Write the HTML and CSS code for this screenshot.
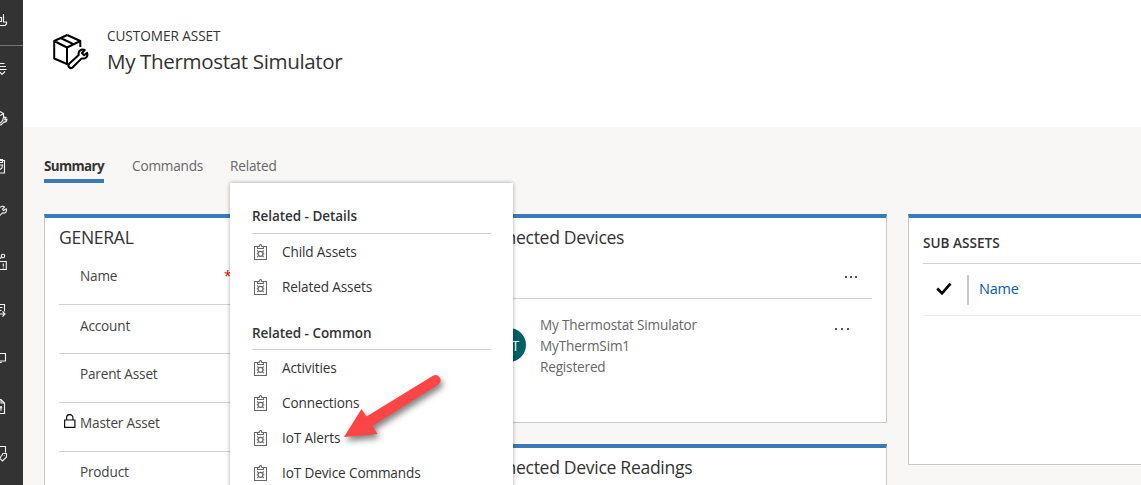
FILE: index.html
```html
<!DOCTYPE html>
<html lang="en">
<head>
<meta charset="utf-8">
<title>My Thermostat Simulator</title>
<link rel="stylesheet" href="styles.css">
</head>
<body>
<svg class="defs" width="0" height="0" aria-hidden="true">
  <symbol id="clip" viewBox="0 0 13 16">
    <path d="M3.500 2.500H.500v13h12v-13H9.500M3 4.500h7M3.500 4.500v-2h1.700C5.200 0 7.800 0 7.800 2.500h1.700v2" fill="none" stroke="#666" stroke-width="1.100"/>
    <circle cx="6.500" cy="9.800" r="2.500" fill="none" stroke="#666" stroke-width="1.200"/>
    <path d="M3.200 6.500l1.400 1.400M9.800 6.500L8.400 7.900M3.200 13.100l1.400-1.400M9.800 13.100l-1.400-1.400M2.700 9.800h1.200M9.100 9.800h1.200" stroke="#666" stroke-width="1.100"/>
  </symbol>
</svg>
<div class="app">
  <nav class="rail">
    <svg class="first" width="23" height="45" viewBox="0 0 23 45"><path d="M0 17.500h1.500M1.500 17v4.500H0M3.500 14v8M3.500 17.500v4.500H6.500v2L5 25.500H0" /></svg>
    <svg width="23" height="48" viewBox="0 45 23 48"><path d="M0 63.500h4.500M0 66.500h6M0 69.500h6.500M0 72l2 2.500L5 71.500"/></svg>
    <svg width="23" height="48" viewBox="0 93 23 48"><path d="M0 111.500l3.500 2v4M0 115.500l3-1.500M0 123.500l3-3.500c-.5-2 1.500-3.500 3-2.500L4.700 119l.6 1 1.500-.8c.2 2-1 3.200-3 2.900L1 125H0"/></svg>
    <svg width="23" height="48" viewBox="0 141 23 48"><path d="M0 160.500h4.500v12.500H0M0 162.500h2.500v-3H0M0 165h2.500l-.5 3-2 1.500"/></svg>
    <svg width="23" height="48" viewBox="0 189 23 48"><path d="M0 207.500c1.500-1.800 4-1.300 4.500-.5L2.500 209l1 1.500 2.700-1.700c1 3-1.200 5-3.700 4L0 215.500"/></svg>
    <svg width="23" height="48" viewBox="0 237 23 48"><circle cx="3" cy="256" r="1.700"/><path d="M0 258.500l1.500-1.200M0 261.500h6.300v8H0M3.300 263.500v3M3.300 267.500v1"/></svg>
    <svg width="23" height="48" viewBox="0 285 23 48"><path d="M0 304.500h4.500v7M0 307.500h2.500M0 310.500h1.500M0 314h4.500M2.500 311.500l2.500 2.500-2.500 2.500"/></svg>
    <svg width="23" height="48" viewBox="0 333 23 48"><path d="M0 353.500h5.500v7.500H0M0 362.500h1.800"/></svg>
    <svg width="23" height="48" viewBox="0 381 23 48"><path d="M0 399.500h1l3.500 3.500v10.500H0M1 399.500v3.500h3M0 406.500l2 2M2 406.500l-2 2M0 410h2"/></svg>
    <svg width="23" height="48" viewBox="0 429 23 48"><path d="M0 446.500h5.500v6M0 458l3-4.500h3.500v3.500L2.500 461 0 458.500M4.500 455.300v.5"/></svg>
  </nav>
  <main class="main">
    <header class="head">
      <svg class="logo" width="38" height="38" viewBox="0 0 38 38" fill="none" stroke="#000" stroke-width="2" stroke-linejoin="round">
        <path d="M15.200 2L28.300 8v6M15.200 2L2.200 8v17.500L15 31V14.500L28.300 8M2.200 8L15 14.500M8.500 5l13.500 6.300"/>
        <path d="M17.400 30.500l9.300-8.500c-.8-4 2.500-6.500 6-5l-2.800 3 2.200 2.200 3-2.500c1.300 4-1.600 6.500-5.400 5.700L20.800 34.200c-2.500 2.400-6-.9-3.400-3.700z"/>
      </svg>
      <div class="titles">
        <span class="kind">CUSTOMER ASSET</span>
        <h1 class="title">My Thermostat Simulator</h1>
      </div>
    </header>
    <div class="tabs">
      <span class="tab active">Summary</span>
      <span class="tab commands">Commands</span>
      <div class="tab related">Related
        <div class="menu">
          <h3>Related - Details</h3>
          <a><svg><use href="#clip"/></svg><span>Child Assets</span></a>
          <a><svg><use href="#clip"/></svg><span>Related Assets</span></a>
          <h3 class="second">Related - Common</h3>
          <a><svg><use href="#clip"/></svg><span>Activities</span></a>
          <a><svg><use href="#clip"/></svg><span>Connections</span></a>
          <a><svg><use href="#clip"/></svg><span>IoT Alerts</span></a>
          <a><svg><use href="#clip"/></svg><span>IoT Device Commands</span></a>
        </div>
      </div>
    </div>
    <div class="columns">
      <section class="card general">
        <h2>GENERAL</h2>
        <div class="field name">Name<i>*</i></div>
        <div class="field">Account</div>
        <div class="field up">Parent Asset</div>
        <div class="field up"><svg class="lock" width="12" height="14" viewBox="0 0 12 14"><path d="M.6 6h10.300v7.400H.6zM2.600 6V3.700c0-4.200 6.300-4.200 6.300 0V6" fill="none" stroke="#111" stroke-width="1.200"/></svg>Master Asset</div>
        <div class="field up">Product</div>
      </section>
      <div class="stack">
        <section class="card devices">
          <h2>Connected Devices</h2>
          <div class="toolbar"><span class="dots"><b></b><b></b><b></b></span></div>
          <div class="device">
            <span class="avatar">MT</span>
            <div class="info"><span>My Thermostat Simulator</span><span>MyThermSim1</span><span>Registered</span></div>
            <span class="dots big"><b></b><b></b><b></b></span>
          </div>
        </section>
        <section class="card readings"><h2>Connected Device Readings</h2></section>
      </div>
      <section class="card sub">
        <h4>SUB ASSETS</h4>
        <div class="row">
          <svg class="check" width="16" height="14" viewBox="0 0 16 14"><path d="M1.200 6.500L6 11.300 14.500 1.700" fill="none" stroke="#000" stroke-width="2.700"/></svg>
          <span class="colname">Name</span>
        </div>
      </section>
    </div>
  </main>
  <svg class="arrow" width="120" height="80" viewBox="340 365 120 80">
    <path d="M344 437L361.500 409L366.500 416.500L433 375.700A5.200 5.200 0 0 1 439 384L372.500 426L377.500 434Z" fill="#fd4545"/>
  </svg>
</div>
</body>
</html>
```
FILE: styles.css
```css
* { box-sizing: border-box; }
body { margin: 0; overflow: hidden; font-family: "Open Sans", "Noto Sans", sans-serif; font-size: 13.6px; letter-spacing: -.18px; color: #333; }
h1, h2, h3, h4 { margin: 0; font-weight: 400; }
.defs { position: absolute; }
.app { display: flex; width: 1141px; height: 485px; overflow: hidden; background: #f8f7f6; position: relative; }
.rail { width: 23px; flex: none; background: #333; overflow: hidden; }
.rail svg { display: block; fill: none; stroke: #f5f5f5; stroke-width: 1.1; }
.rail .first { border-bottom: 1px solid #777; height: 46px; margin-bottom: -1px; }
.main { flex: 1; min-width: 0; }
.head { height: 127px; background: #fff; display: flex; padding: 26px 0 0 29px; }
.logo { margin-top: 7px; flex: none; }
.titles { display: flex; flex-direction: column; padding-left: 17px; }
.kind { line-height: 20px; font-size: 13.6px; letter-spacing: -.05px; }
.title { font-size: 20.6px; letter-spacing: -.37px; line-height: 30px; white-space: nowrap; }
.tabs { display: flex; height: 56px; padding: 30px 0 0 21px; color: #666; }
.tab { height: 26px; line-height: 18px; margin-right: 28px; white-space: nowrap; }
.active { color: #333; font-weight: 700; font-size: 13.4px; line-height: 19px; letter-spacing: -.6px; border-bottom: 4px solid #3b79b7; width: 60px; }
.commands { width: 70px; }
.related { position: relative; width: 48px; }
.menu { position: absolute; z-index: 2; left: 0; top: 26px; width: 283px; height: 310px; background: #fff; padding: 17px 22px 0; color: #333; box-shadow: 0 0 4px rgba(0,0,0,.35); }
.menu h3 { font-size: 13.5px; font-weight: 600; letter-spacing: -.05px; line-height: 33px; height: 34px; border-bottom: 1px solid #d2d2d2; }
.menu a { display: flex; height: 35px; align-items: center; padding-top: 2px; }
.menu a svg { width: 13px; height: 16px; margin: -2px 15px 0 2px; }
.menu a span { margin-top: -2px; letter-spacing: -.13px; }
.menu .second { margin-top: 12px; line-height: 35px; }
.menu .second ~ a { padding-top: 3px; }
.columns { display: grid; grid-template-columns: 394px 428px 421px; gap: 21px; padding: 31px 0 0 21px; align-items: start; }
.card { background: #fff; border: 1px solid #c8c8c8; border-top: 4px solid #3b79b7; }
.card h2 { font-size: 17.6px; letter-spacing: -.32px; line-height: 24px; padding-top: 7px; height: 36px; }
.general { padding: 0 14px; height: 400px; }
.field { height: 49px; border-bottom: 1px solid #d2d2d2; padding: 11px 0 0 21px; line-height: 20px; color: #444; position: relative; }
.field.up { padding-top: 10px; }
.field.name { height: 51px; padding-top: 12px; }
.field i { position: absolute; left: 165px; top: 12px; color: #e00; font-style: normal; }
.lock { position: absolute; left: 5px; top: 11px; }
.stack { display: grid; gap: 21px; }
.devices { height: 209px; padding: 0 14px; }
.toolbar { height: 45px; border-bottom: 1px solid #d2d2d2; display: flex; justify-content: flex-end; padding: 22px 15px 0 0; }
.dots { display: flex; gap: 3px; }
.dots b { width: 2px; height: 2px; background: #555; }
.dots.big { gap: 4px; margin: 29px 23px 0 auto; }
.device { display: flex; padding-left: 18px; }
.avatar { width: 34px; height: 34px; border-radius: 50%; background: #006064; color: #fff; text-align: right; line-height: 36px; margin-top: 29px; padding-right: 7px; }
.info { display: flex; flex-direction: column; margin: 15px 0 0 14px; line-height: 21px; color: #666; }
.readings { height: 200px; padding: 0 14px; }
.sub { height: 251px; padding: 0 0 0 14px; }
.sub h4 { font-size: 13.6px; font-weight: 600; letter-spacing: 0; line-height: 20px; height: 46px; padding-top: 15px; border-bottom: 1px solid #d2d2d2; }
.row { display: flex; height: 52px; border-bottom: 1px solid #eee; align-items: center; padding-left: 12px; margin-left: 1px; }
.check { margin-top: -2px; }
.colname { border-left: 2px solid #c8c8c8; height: 30px; line-height: 28px; margin-left: 15px; padding-left: 10px; color: #0b5a9c; font-size: 14.5px; }
.arrow { position: absolute; z-index: 3; left: 340px; top: 365px; filter: drop-shadow(2px 4px 3px rgba(0,0,0,.5)); overflow: visible; }
```
